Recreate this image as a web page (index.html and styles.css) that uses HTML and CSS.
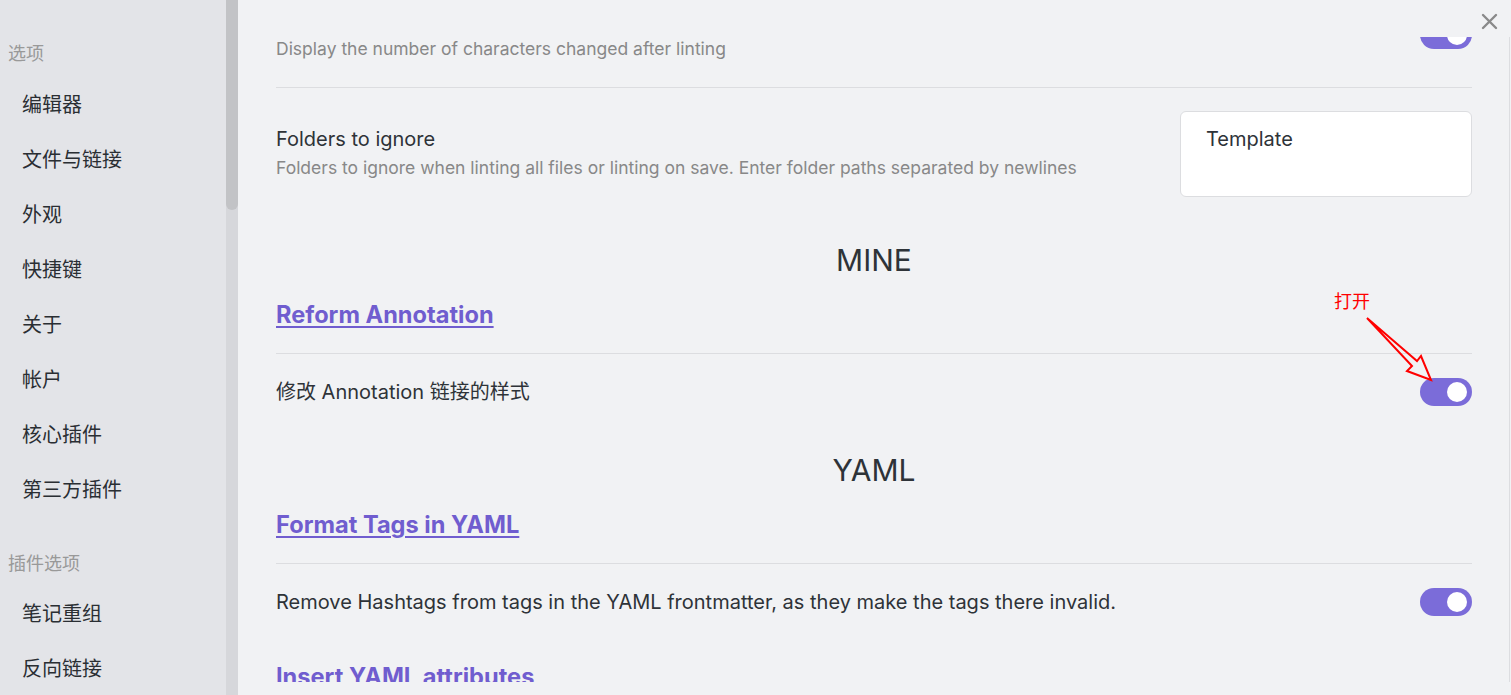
FILE: index.html
```html
<!DOCTYPE html>
<html lang="zh-CN">
<head>
<meta charset="utf-8">
<title>Settings</title>
<link rel="stylesheet" href="styles.css">
</head>
<body>
<div class="app">
  <aside class="sidebar">
    <nav class="side-list">
      <div class="side-title">选项</div>
      <div class="side-items">
        <div class="side-item">编辑器</div>
        <div class="side-item">文件与链接</div>
        <div class="side-item">外观</div>
        <div class="side-item">快捷键</div>
        <div class="side-item">关于</div>
        <div class="side-item">帐户</div>
        <div class="side-item">核心插件</div>
        <div class="side-item">第三方插件</div>
      </div>
      <div class="side-title side-title-plugins">插件选项</div>
      <div class="side-items">
        <div class="side-item">笔记重组</div>
        <div class="side-item">反向链接</div>
      </div>
    </nav>
    <div class="side-scrollbar"><div class="side-thumb"></div></div>
  </aside>

  <main class="main">
    <button class="close" aria-label="Close">
      <svg width="17" height="17" viewBox="0 0 17 17"><path d="M2 2 L15 15 M15 2 L2 15" stroke="#8a8a8a" stroke-width="2.4" stroke-linecap="round" fill="none"/></svg>
    </button>

    <div class="scroll">
      <div class="content">
        <div class="setting setting-first">
          <div class="info">
            <div class="name">Display changed</div>
            <div class="desc">Display the number of characters changed after linting</div>
          </div>
          <div class="toggle"><div class="knob"></div></div>
        </div>

        <div class="setting setting-textarea">
          <div class="info">
            <div class="name">Folders to ignore</div>
            <div class="desc">Folders to ignore when linting all files or linting on save. Enter folder paths separated by newlines</div>
          </div>
          <textarea class="input" spellcheck="false">Template</textarea>
        </div>

        <h2 class="section">MINE</h2>
        <h3 class="rule"><a href="#">Reform Annotation</a></h3>
        <div class="setting">
          <div class="info info-single">
            <div class="name">修改 Annotation 链接的样式</div>
          </div>
          <div class="toggle"><div class="knob"></div></div>
        </div>

        <h2 class="section">YAML</h2>
        <h3 class="rule"><a href="#">Format Tags in YAML</a></h3>
        <div class="setting">
          <div class="info info-single">
            <div class="name">Remove Hashtags from tags in the YAML frontmatter, as they make the tags there invalid.</div>
          </div>
          <div class="toggle"><div class="knob"></div></div>
        </div>

        <h3 class="rule"><a href="#">Insert YAML attributes</a></h3>
      </div>
    </div>

    <div class="note">打开</div>
    <svg class="arrow" width="80" height="80" viewBox="0 0 80 80">
      <polygon points="7,8 57,51 61,46 71,70 47,61 52,56" fill="none" stroke="#ff0000" stroke-width="2" stroke-linejoin="miter"/>
    </svg>
  </main>
</div>
</body>
</html>
```

FILE: styles.css
```css
* { box-sizing: border-box; }

html, body {
  margin: 0;
  padding: 0;
  height: 100%;
}

body {
  font-family: Inter, "Noto Sans CJK SC", sans-serif;
  color: #2e3338;
  overflow: hidden;
}

.app {
  display: flex;
  width: 1511px;
  height: 695px;
}

/* Sidebar */
.sidebar {
  display: flex;
  flex-shrink: 0;
  width: 238px;
  height: 100%;
}

.side-list {
  width: 226px;
  height: 100%;
  background: #e3e4e8;
  padding-top: 36px;
  overflow: hidden;
}

.side-title {
  font-size: 18px;
  line-height: 36px;
  height: 36px;
  color: #999999;
  padding-left: 8px;
  margin-bottom: 6px;
}

.side-title-plugins {
  margin-top: 28px;
  margin-bottom: 5px;
}

.side-items {
  display: flex;
  flex-direction: column;
}

.side-item {
  height: 55px;
  line-height: 55px;
  font-size: 20px;
  padding-left: 22px;
  color: #2a2e33;
  white-space: nowrap;
}

.side-scrollbar {
  width: 12px;
  height: 100%;
  background: #d6d7db;
}

.side-thumb {
  width: 12px;
  height: 210px;
  background: #c2c3c6;
  border-radius: 0 0 6px 6px;
}

/* Main */
.main {
  position: relative;
  flex: 1;
  height: 100%;
  background: #f1f2f4;
  padding-top: 37px;
}

.close {
  position: absolute;
  top: 12px;
  right: 12px;
  width: 19px;
  height: 19px;
  padding: 1px;
  border: 0;
  background: transparent;
  display: flex;
  align-items: center;
  justify-content: center;
  cursor: pointer;
}

.scroll {
  height: 645px;
  overflow: hidden;
  padding: 0 37px 0 38px;
  margin-right: 1px;
  border-right: 1px solid #dcdde0;
}

.content {
  margin-top: -54px;
}

.setting {
  display: flex;
  align-items: center;
  gap: 40px;
  padding: 24px 0;
  border-top: 1px solid #dcdde0;
}

.setting-first {
  border-top: 0;
  padding: 24px 0 24px;
}

.setting-textarea {
  padding: 23px 0;
}

.info {
  flex: 1;
  display: flex;
  flex-direction: column;
  gap: 5px;
  min-width: 0;
  padding-bottom: 3px;
}

.info-single {
  padding-bottom: 0;
}

.name {
  font-size: 20px;
  line-height: 26px;
  color: #2e3338;
}

.desc {
  font-size: 17.5px;
  line-height: 22px;
  color: #888888;
}

.toggle {
  flex-shrink: 0;
  width: 52px;
  height: 28px;
  border-radius: 14px;
  background: #7b6cd9;
  display: flex;
  align-items: center;
  justify-content: flex-end;
  padding: 0 5px;
}

.knob {
  width: 20px;
  height: 20px;
  border-radius: 50%;
  background: #ffffff;
}

.input {
  flex-shrink: 0;
  width: 292px;
  height: 86px;
  border: 1px solid #dcdde0;
  border-radius: 6px;
  background: #ffffff;
  font-family: Inter, "Noto Sans CJK SC", sans-serif;
  font-size: 20px;
  line-height: 26px;
  color: #2e3338;
  padding: 14px 25px;
  resize: none;
  overflow: hidden;
  outline: none;
}

.section {
  margin: 22px 0 0;
  font-size: 30px;
  line-height: 36px;
  font-weight: 400;
  text-align: center;
  color: #2e3338;
}

.rule {
  margin: 23px 0 24px;
  font-size: 23.6px;
  line-height: 28px;
  font-weight: 700;
}

.rule a {
  color: #705dcf;
  text-decoration: underline;
  text-decoration-thickness: 2px;
  text-underline-offset: 3px;
}

/* Annotation overlay */
.note {
  position: absolute;
  left: 1096px;
  top: 288px;
  font-size: 18px;
  line-height: 24px;
  color: #ff0000;
  font-family: "Noto Sans CJK SC", sans-serif;
}

.arrow {
  position: absolute;
  left: 1122px;
  top: 310px;
}
```
